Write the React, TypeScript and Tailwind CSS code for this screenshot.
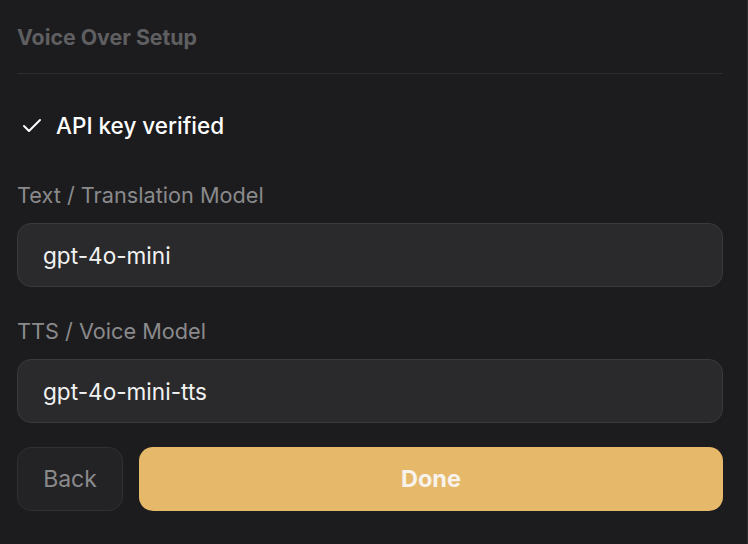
import React, { useState } from "react";
import { Check } from "lucide-react";

const font = { fontFamily: "Inter, 'Noto Sans', sans-serif" };

const ModelField: React.FC<{ label: string; value: string; onChange: (v: string) => void }> = ({
  label,
  value,
  onChange,
}) => (
  <div className="flex flex-col">
    <label className="text-[21.7px] leading-[28px] text-[#8a8a8c] mb-[14px]">{label}</label>
    <input
      value={value}
      onChange={(e) => onChange(e.target.value)}
      className="h-[64px] w-full rounded-[14px] border border-[#3a3a3c] bg-[#2a2a2c] px-[25px] text-[22.6px] text-[#f2f2f2] outline-none"
    />
  </div>
);

const App: React.FC = () => {
  const [textModel, setTextModel] = useState("gpt-4o-mini");
  const [ttsModel, setTtsModel] = useState("gpt-4o-mini-tts");

  return (
    <div className="h-[544px] w-[748px] overflow-hidden bg-[#1c1c1e] border-r border-[#2e2e30]" style={font}>
      <div className="pl-[17px] pr-[24px] pt-[23px]">
        {/* Header */}
        <div className="border-b border-[#2c2c2e] pb-[22px]">
          <h2 className="text-[21.3px] leading-[28px] font-bold text-[#5f5f61]">Voice Over Setup</h2>
        </div>

        <div className="mt-[36px] flex items-center gap-[12px] pl-[3px]">
          <Check size={24} strokeWidth={2} className="text-white" />
          <span className="text-[22.5px] leading-[32px] font-medium text-white">API key verified</span>
        </div>

        <div className="mt-[39px] flex flex-col gap-[30px]">
          <ModelField label="Text / Translation Model" value={textModel} onChange={setTextModel} />
          <ModelField label="TTS / Voice Model" value={ttsModel} onChange={setTtsModel} />
        </div>

        {/* Actions */}
        <div className="mt-[24px] flex gap-[16px]">
          <button className="h-[64px] w-[106px] rounded-[14px] border border-[#303032] bg-[#232325] text-[23px] text-[#8a8a8c]">
            Back
          </button>
          <button className="h-[64px] flex-1 rounded-[14px] bg-[#e6b86a] text-[23.5px] font-bold text-[#f7f3ec]">
            Done
          </button>
        </div>
      </div>
    </div>
  );
};

export default App;
